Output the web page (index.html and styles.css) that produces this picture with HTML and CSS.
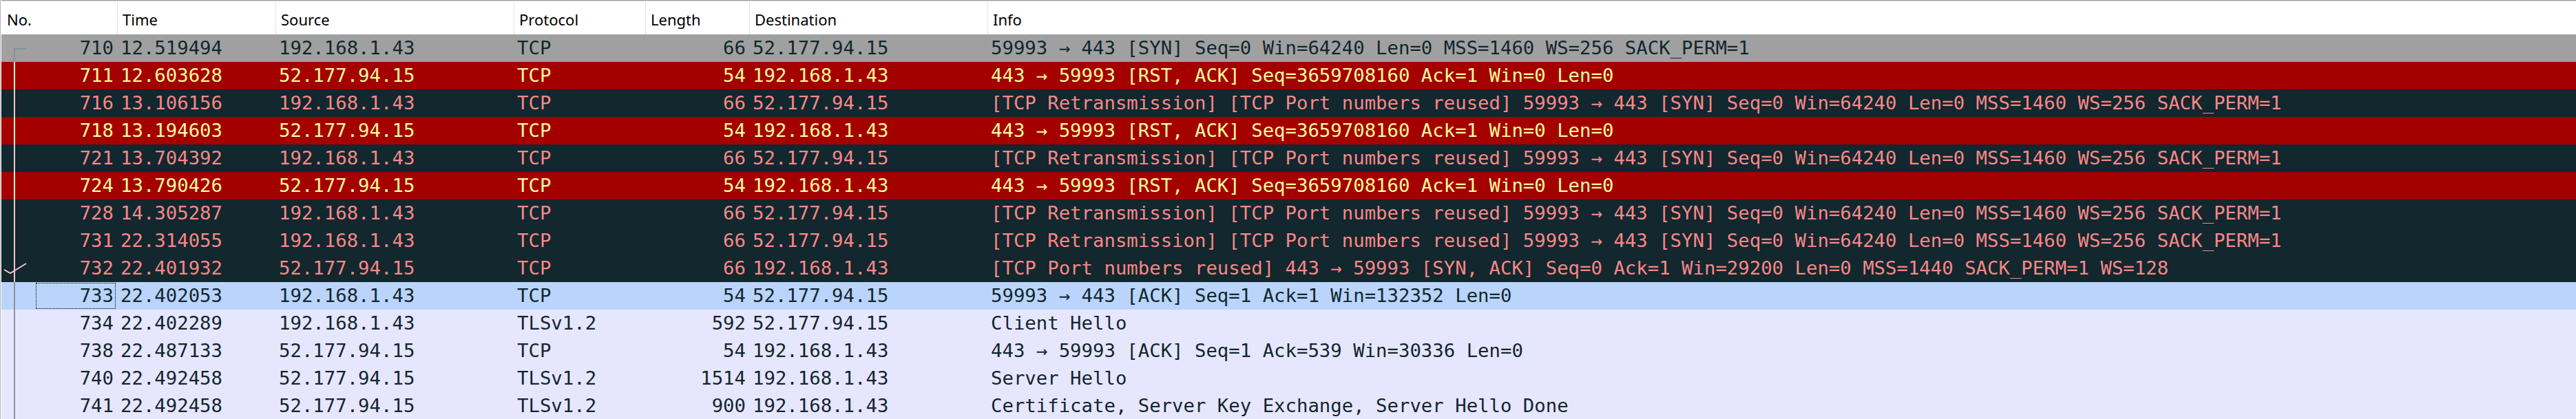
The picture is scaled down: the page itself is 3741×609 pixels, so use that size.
FILE: index.html
```html
<!DOCTYPE html>
<html>
<head>
<meta charset="utf-8">
<title>Packet list</title>
<link rel="stylesheet" href="styles.css">
</head>
<body>
<div class="list">
  <div class="head">
    <div class="h">No.</div>
    <div class="h">Time</div>
    <div class="h">Source</div>
    <div class="h">Protocol</div>
    <div class="h">Length</div>
    <div class="h">Destination</div>
    <div class="h">Info</div>
  </div>

  <div class="row syn">
    <div class="no"><svg class="ind" viewBox="0 0 40 40"><rect x="18" y="20" width="2" height="20"/><rect x="18" y="20" width="18" height="2"/></svg><span class="num">710</span></div>
    <div class="c">12.519494</div><div class="c">192.168.1.43</div><div class="c">TCP</div><div class="c r">66</div><div class="c">52.177.94.15</div>
    <div class="c">59993 → 443 [SYN] Seq=0 Win=64240 Len=0 MSS=1460 WS=256 SACK_PERM=1</div>
  </div>
  <div class="row rst">
    <div class="no"><svg class="ind" viewBox="0 0 40 40"><rect x="18" y="0" width="2" height="40"/></svg><span class="num">711</span></div>
    <div class="c">12.603628</div><div class="c">52.177.94.15</div><div class="c">TCP</div><div class="c r">54</div><div class="c">192.168.1.43</div>
    <div class="c">443 → 59993 [RST, ACK] Seq=3659708160 Ack=1 Win=0 Len=0</div>
  </div>
  <div class="row bad">
    <div class="no"><svg class="ind" viewBox="0 0 40 40"><rect x="18" y="0" width="2" height="40"/></svg><span class="num">716</span></div>
    <div class="c">13.106156</div><div class="c">192.168.1.43</div><div class="c">TCP</div><div class="c r">66</div><div class="c">52.177.94.15</div>
    <div class="c">[TCP Retransmission] [TCP Port numbers reused] 59993 → 443 [SYN] Seq=0 Win=64240 Len=0 MSS=1460 WS=256 SACK_PERM=1</div>
  </div>
  <div class="row rst">
    <div class="no"><svg class="ind" viewBox="0 0 40 40"><rect x="18" y="0" width="2" height="40"/></svg><span class="num">718</span></div>
    <div class="c">13.194603</div><div class="c">52.177.94.15</div><div class="c">TCP</div><div class="c r">54</div><div class="c">192.168.1.43</div>
    <div class="c">443 → 59993 [RST, ACK] Seq=3659708160 Ack=1 Win=0 Len=0</div>
  </div>
  <div class="row bad">
    <div class="no"><svg class="ind" viewBox="0 0 40 40"><rect x="18" y="0" width="2" height="40"/></svg><span class="num">721</span></div>
    <div class="c">13.704392</div><div class="c">192.168.1.43</div><div class="c">TCP</div><div class="c r">66</div><div class="c">52.177.94.15</div>
    <div class="c">[TCP Retransmission] [TCP Port numbers reused] 59993 → 443 [SYN] Seq=0 Win=64240 Len=0 MSS=1460 WS=256 SACK_PERM=1</div>
  </div>
  <div class="row rst">
    <div class="no"><svg class="ind" viewBox="0 0 40 40"><rect x="18" y="0" width="2" height="40"/></svg><span class="num">724</span></div>
    <div class="c">13.790426</div><div class="c">52.177.94.15</div><div class="c">TCP</div><div class="c r">54</div><div class="c">192.168.1.43</div>
    <div class="c">443 → 59993 [RST, ACK] Seq=3659708160 Ack=1 Win=0 Len=0</div>
  </div>
  <div class="row bad">
    <div class="no"><svg class="ind" viewBox="0 0 40 40"><rect x="18" y="0" width="2" height="40"/></svg><span class="num">728</span></div>
    <div class="c">14.305287</div><div class="c">192.168.1.43</div><div class="c">TCP</div><div class="c r">66</div><div class="c">52.177.94.15</div>
    <div class="c">[TCP Retransmission] [TCP Port numbers reused] 59993 → 443 [SYN] Seq=0 Win=64240 Len=0 MSS=1460 WS=256 SACK_PERM=1</div>
  </div>
  <div class="row bad">
    <div class="no"><svg class="ind" viewBox="0 0 40 40"><rect x="18" y="0" width="2" height="40"/></svg><span class="num">731</span></div>
    <div class="c">22.314055</div><div class="c">192.168.1.43</div><div class="c">TCP</div><div class="c r">66</div><div class="c">52.177.94.15</div>
    <div class="c">[TCP Retransmission] [TCP Port numbers reused] 59993 → 443 [SYN] Seq=0 Win=64240 Len=0 MSS=1460 WS=256 SACK_PERM=1</div>
  </div>
  <div class="row bad">
    <div class="no"><svg class="ind" viewBox="0 0 40 40"><rect x="18" y="0" width="2" height="40"/><polyline points="4,22 13,27 36,13" fill="none" stroke="currentColor" stroke-width="2"/></svg><span class="num">732</span></div>
    <div class="c">22.401932</div><div class="c">52.177.94.15</div><div class="c">TCP</div><div class="c r">66</div><div class="c">192.168.1.43</div>
    <div class="c">[TCP Port numbers reused] 443 → 59993 [SYN, ACK] Seq=0 Ack=1 Win=29200 Len=0 MSS=1440 SACK_PERM=1 WS=128</div>
  </div>
  <div class="row sel">
    <div class="no"><svg class="ind" viewBox="0 0 40 40"><rect x="18" y="0" width="2" height="40"/></svg><span class="num focus">733</span></div>
    <div class="c">22.402053</div><div class="c">192.168.1.43</div><div class="c">TCP</div><div class="c r">54</div><div class="c">52.177.94.15</div>
    <div class="c">59993 → 443 [ACK] Seq=1 Ack=1 Win=132352 Len=0</div>
  </div>
  <div class="row tcp">
    <div class="no"><svg class="ind" viewBox="0 0 40 40"><rect x="18" y="0" width="2" height="40"/></svg><span class="num">734</span></div>
    <div class="c">22.402289</div><div class="c">192.168.1.43</div><div class="c">TLSv1.2</div><div class="c r">592</div><div class="c">52.177.94.15</div>
    <div class="c">Client Hello</div>
  </div>
  <div class="row tcp">
    <div class="no"><svg class="ind" viewBox="0 0 40 40"><rect x="18" y="0" width="2" height="40"/></svg><span class="num">738</span></div>
    <div class="c">22.487133</div><div class="c">52.177.94.15</div><div class="c">TCP</div><div class="c r">54</div><div class="c">192.168.1.43</div>
    <div class="c">443 → 59993 [ACK] Seq=1 Ack=539 Win=30336 Len=0</div>
  </div>
  <div class="row tcp">
    <div class="no"><svg class="ind" viewBox="0 0 40 40"><rect x="18" y="0" width="2" height="40"/></svg><span class="num">740</span></div>
    <div class="c">22.492458</div><div class="c">52.177.94.15</div><div class="c">TLSv1.2</div><div class="c r">1514</div><div class="c">192.168.1.43</div>
    <div class="c">Server Hello</div>
  </div>
  <div class="row tcp">
    <div class="no"><svg class="ind" viewBox="0 0 40 40"><rect x="18" y="0" width="2" height="40"/></svg><span class="num">741</span></div>
    <div class="c">22.492458</div><div class="c">52.177.94.15</div><div class="c">TLSv1.2</div><div class="c r">900</div><div class="c">192.168.1.43</div>
    <div class="c">Certificate, Server Key Exchange, Server Hello Done</div>
  </div>
</div>
</body>
</html>
```

FILE: styles.css
```css
html, body {
  margin: 0;
  padding: 0;
  background: #ffffff;
  overflow: hidden;
}

.list {
  border-left: 1px solid #b4b4b4;
  padding-left: 1px;
  background: #ffffff;
}

.head,
.row {
  display: grid;
  grid-template-columns: 168px 230px 346px 191px 151px 346px 1fr;
}

.head {
  height: 50px;
  box-sizing: border-box;
  border-top: 1px solid #9c9c9c;
  box-shadow: inset 0 1px 0 #dedede;
  background: #ffffff;
  font-family: "Noto Sans", "Liberation Sans", sans-serif;
  font-size: 22px;
  color: #000000;
}

.h {
  padding: 12px 0 0 7px;
  line-height: 30px;
  border-left: 1px solid #e5e5e5;
  white-space: nowrap;
  overflow: hidden;
}

.h:first-child {
  border-left: none;
  padding-left: 8px;
}

.row {
  height: 40px;
  font-family: "DejaVu Sans Mono", "Liberation Mono", monospace;
  font-size: 27.32px;
  line-height: 40px;
  white-space: pre;
}

.c {
  padding-left: 5px;
  overflow: hidden;
}

.c.r {
  text-align: right;
  padding-right: 5px;
  padding-left: 0;
}

.no {
  display: flex;
}

.ind {
  width: 40px;
  height: 40px;
  flex: none;
  fill: currentColor;
}

.num {
  flex: 1;
  text-align: right;
  margin: 1px 2px 1px 10px;
  padding-right: 2px;
  border: 1px dotted transparent;
  height: 38px;
  line-height: 36px;
  box-sizing: border-box;
}

.num.focus {
  border-color: #000000;
}

.syn { background: #a0a0a0; color: #12272e; }
.syn .ind { color: #85939b; }

.rst { background: #a40000; color: #fffc9c; }
.rst .ind { color: #fff6c4; }

.bad { background: #12272e; color: #f78787; }
.bad .ind { color: #f6c4c4; }

.sel { background: #bad4fc; color: #12272e; }
.sel .ind { color: #8e939c; }

.tcp { background: #e7e6ff; color: #12272e; }
.tcp .ind { color: #8e939c; }
```
